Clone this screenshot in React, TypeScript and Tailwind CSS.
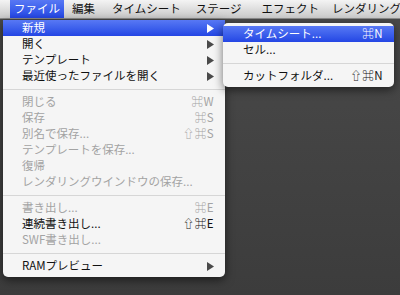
const font = { fontFamily: '"Noto Sans CJK JP", "DejaVu Sans", sans-serif' };

type Item =
  | { sep: true }
  | { label: string; key?: string; sub?: boolean; off?: boolean; active?: boolean };

const fileMenu: Item[] = [
  { label: "新規", sub: true, active: true },
  { label: "開く", sub: true },
  { label: "テンプレート", sub: true },
  { label: "最近使ったファイルを開く", sub: true },
  { sep: true },
  { label: "閉じる", key: "⌘W", off: true },
  { label: "保存", key: "⌘S", off: true },
  { label: "別名で保存...", key: "⇧⌘S", off: true },
  { label: "テンプレートを保存...", off: true },
  { label: "復帰", off: true },
  { label: "レンダリングウインドウの保存...", off: true },
  { sep: true },
  { label: "書き出し...", key: "⌘E", off: true },
  { label: "連続書き出し...", key: "⇧⌘E" },
  { label: "SWF書き出し...", off: true },
  { sep: true },
  { label: "RAMプレビュー", sub: true },
];

const newMenu: Item[] = [
  { label: "タイムシート...", key: "⌘N", active: true },
  { label: "セル..." },
  { sep: true },
  { label: "カットフォルダ...", key: "⇧⌘N" },
];

const menuBar = [
  { label: "ファイル", cls: "ml-[10px] pl-[4px] pr-[4px] bg-gradient-to-b from-[#5878f4] to-[#2445e4] text-white" },
  { label: "編集", cls: "ml-[8px]" },
  { label: "タイムシート", cls: "ml-[17px]" },
  { label: "ステージ", cls: "ml-[15px]" },
  { label: "エフェクト", cls: "ml-[20px]" },
  { label: "レンダリング", cls: "ml-[13px]" },
];

function Arrow({ white }: { white?: boolean }) {
  return (
    <svg width="7" height="9" viewBox="0 0 7 9" className="shrink-0">
      <path d="M0 0 L7 4.5 L0 9 Z" fill={white ? "#ffffff" : "#4a4a4a"} />
    </svg>
  );
}

function MenuRows({ items, pl }: { items: Item[]; pl: string }) {
  return (
    <>
      {items.map((it, i) =>
        "sep" in it ? (
          <div key={i} className="h-[10px] flex items-center">
            <div className="h-px w-full bg-[#d6d6d6]" />
          </div>
        ) : (
          <div
            key={i}
            className={`h-4 flex items-center justify-between ${pl} pr-[11px] ${
              it.active
                ? "bg-gradient-to-b from-[#5878f4] to-[#2445e4] text-white"
                : it.off
                ? "text-[#a3a3a3]"
                : "text-[#111111]"
            }`}
          >
            <span className="whitespace-nowrap">{it.label}</span>
            {it.key && <span className="whitespace-nowrap tracking-[0.5px]">{it.key}</span>}
            {it.sub && <Arrow white={it.active} />}
          </div>
        )
      )}
    </>
  );
}

export default function App() {
  return (
    <div
      className="relative w-[400px] h-[295px] overflow-hidden bg-gradient-to-b from-[#4a4a4a] to-[#3c3c3c] text-[11.5px] leading-none"
      style={font}
    >
      {/* menu bar */}
      <div className="h-[19px] flex items-stretch bg-gradient-to-b from-[#f4f4f4] to-[#c9c9c9] border-b border-[#8a8a8a] text-[#111111]">
        {menuBar.map((m) => (
          <div key={m.label} className={`flex items-center whitespace-nowrap ${m.cls}`}>
            {m.label}
          </div>
        ))}
      </div>

      {/* file menu */}
      <div className="absolute left-[3px] top-[20px] w-[222px] pb-[3px] bg-[#f5f5f5] rounded-b-[5px] shadow-[0_3px_10px_rgba(0,0,0,0.55)]">
        <MenuRows items={fileMenu} pl="pl-[19px]" />
      </div>

      {/* new submenu */}
      <div className="absolute left-[223px] top-[23px] w-[171px] py-[3px] bg-[#f5f5f5] rounded-[5px] shadow-[0_3px_10px_rgba(0,0,0,0.55)]">
        <MenuRows items={newMenu} pl="pl-[20px]" />
      </div>
    </div>
  );
}
